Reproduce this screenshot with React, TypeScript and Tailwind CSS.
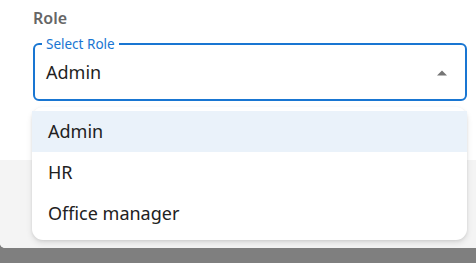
const roles = ["Admin", "HR", "Office manager"];

export default function App() {
  return (
    <div
      className="relative w-[476px] h-[263px] overflow-hidden bg-[#7f7f7f]"
      style={{ fontFamily: '"Noto Sans", "Open Sans", sans-serif' }}
    >
      {/* dialog */}
      <div className="h-[248px] bg-white rounded-bl-[5px] flex flex-col overflow-hidden">
        <div className="h-[160px] pl-[33px] pr-[9px] pt-[6px]">
          <div className="text-[16px] leading-[24px] font-semibold text-[#666666]">Role</div>
          <div className="relative mt-[13px] h-[58px] rounded-[6px] border-2 border-[#1976d2] flex items-center pl-[11px] pr-[10px]">
            <span className="absolute left-[7px] -top-[10px] bg-white px-[4px] text-[13.5px] leading-[18px] text-[#1976d2]">
              Select Role
            </span>
            <span className="flex-1 text-[18px] text-[#1f1f1f]">Admin</span>
            <svg width="24" height="24" viewBox="0 0 24 24" className="mr-[1px] mt-[1px]">
              <path d="M7 14.5l5-5 5 5z" fill="#757575" />
            </svg>
          </div>
        </div>
        <div className="flex-1 bg-[#f4f4f4]" />
      </div>

      {/* open menu */}
      <ul className="absolute left-[32px] top-[107px] w-[435px] bg-white rounded-[11px] pt-[4px] pb-[6px] shadow-[0_3px_6px_rgba(0,0,0,0.10),0_1px_3px_rgba(0,0,0,0.08)]">
        {roles.map((r, i) => (
          <li
            key={r}
            className={`h-[41px] flex items-center pl-[16px] text-[18px] text-[#212121] ${
              i === 0 ? "bg-[#eaf2fa]" : ""
            }`}
          >
            {r}
          </li>
        ))}
      </ul>
    </div>
  );
}
